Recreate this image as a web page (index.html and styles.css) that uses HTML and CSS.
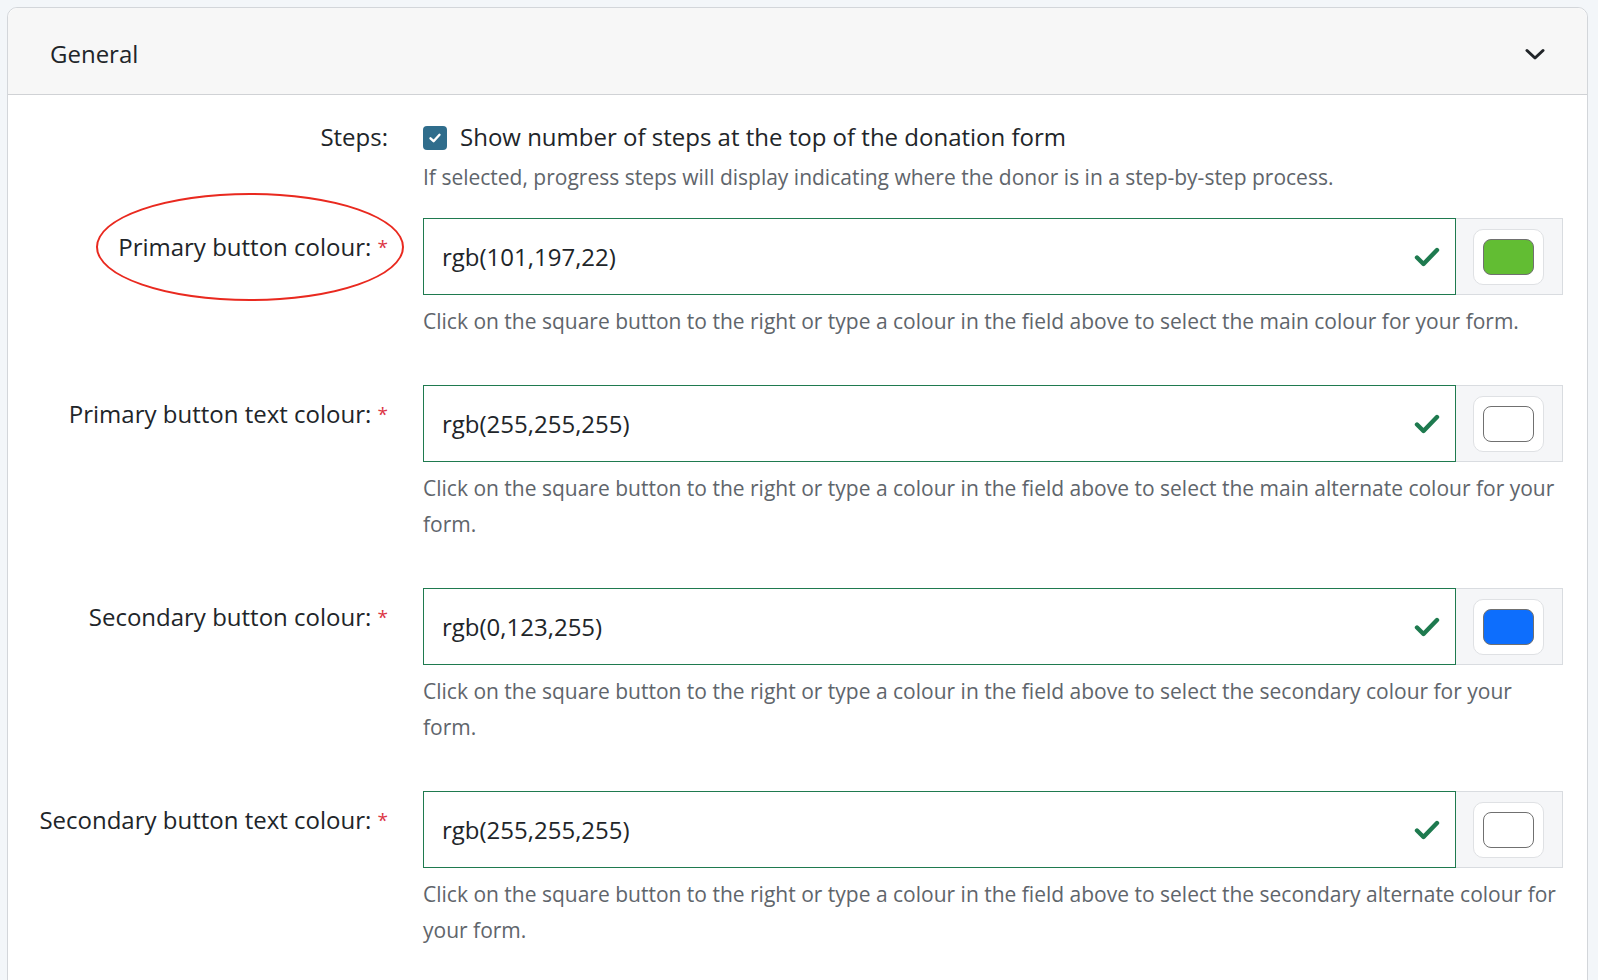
FILE: index.html
```html
<!DOCTYPE html>
<html lang="en">
<head>
<meta charset="utf-8">
<title>General</title>
<link rel="stylesheet" href="styles.css">
</head>
<body>
<div class="card">
  <div class="card-header">
    <span class="card-title">General</span>
    <svg class="chevron" width="20" height="13" viewBox="0 0 20 13"><path d="M2 2.5 L10 10 L18 2.5" fill="none" stroke="#212529" stroke-width="3" stroke-linecap="round" stroke-linejoin="round"/></svg>
  </div>
  <div class="card-body">
    <div class="form-row steps-row">
      <div class="label steps-label">Steps:</div>
      <div class="field">
        <div class="check-line">
          <span class="checkbox"><svg width="16" height="16" viewBox="0 0 16 16"><path d="M3.5 8.3 L6.6 11.2 L12.5 4.8" fill="none" stroke="#fff" stroke-width="2.4" stroke-linecap="round" stroke-linejoin="round"/></svg></span>
          <span class="check-text">Show number of steps at the top of the donation form</span>
        </div>
        <div class="help help-steps">If selected, progress steps will display indicating where the donor is in a step-by-step process.</div>
      </div>
    </div>

    <div class="form-row">
      <div class="label">Primary button colour: <span class="req">*</span><span class="ellipse"></span></div>
      <div class="field">
        <div class="input-group">
          <div class="input">rgb(101,197,22)<svg class="ok" width="26" height="22" viewBox="0 0 26 22"><path d="M3 11.5 L9.5 18 L23 4" fill="none" stroke="#1e7a4f" stroke-width="4.4" stroke-linecap="round" stroke-linejoin="round"/></svg></div>
          <div class="addon"><span class="swatch-btn"><span class="swatch green"></span></span></div>
        </div>
        <div class="help">Click on the square button to the right or type a colour in the field above to select the main colour for your form.</div>
      </div>
    </div>

    <div class="form-row">
      <div class="label">Primary button text colour: <span class="req">*</span></div>
      <div class="field">
        <div class="input-group">
          <div class="input">rgb(255,255,255)<svg class="ok" width="26" height="22" viewBox="0 0 26 22"><path d="M3 11.5 L9.5 18 L23 4" fill="none" stroke="#1e7a4f" stroke-width="4.4" stroke-linecap="round" stroke-linejoin="round"/></svg></div>
          <div class="addon"><span class="swatch-btn"><span class="swatch white"></span></span></div>
        </div>
        <div class="help">Click on the square button to the right or type a colour in the field above to select the main alternate colour for your form.</div>
      </div>
    </div>

    <div class="form-row">
      <div class="label">Secondary button colour: <span class="req">*</span></div>
      <div class="field">
        <div class="input-group">
          <div class="input">rgb(0,123,255)<svg class="ok" width="26" height="22" viewBox="0 0 26 22"><path d="M3 11.5 L9.5 18 L23 4" fill="none" stroke="#1e7a4f" stroke-width="4.4" stroke-linecap="round" stroke-linejoin="round"/></svg></div>
          <div class="addon"><span class="swatch-btn"><span class="swatch blue"></span></span></div>
        </div>
        <div class="help">Click on the square button to the right or type a colour in the field above to select the secondary colour for your form.</div>
      </div>
    </div>

    <div class="form-row">
      <div class="label">Secondary button text colour: <span class="req">*</span></div>
      <div class="field">
        <div class="input-group">
          <div class="input">rgb(255,255,255)<svg class="ok" width="26" height="22" viewBox="0 0 26 22"><path d="M3 11.5 L9.5 18 L23 4" fill="none" stroke="#1e7a4f" stroke-width="4.4" stroke-linecap="round" stroke-linejoin="round"/></svg></div>
          <div class="addon"><span class="swatch-btn"><span class="swatch white"></span></span></div>
        </div>
        <div class="help">Click on the square button to the right or type a colour in the field above to select the secondary alternate colour for your form.</div>
      </div>
    </div>
  </div>
</div>
</body>
</html>
```

FILE: styles.css
```css
*, *::before, *::after {
  box-sizing: border-box;
}
html, body {
  margin: 0;
  padding: 0;
}
body {
  background: #f3f6f9;
  padding: 7px 10px 0 7px;
  font-family: "Open Sans", "Noto Sans", sans-serif;
  color: #212529;
  height: 980px;
  overflow: hidden;
}
.card {
  background: #fff;
  border: 1px solid #d3d6da;
  border-radius: 10px;
  min-height: 1100px;
}
.card-header {
  height: 87px;
  background: #f7f7f7;
  border-bottom: 1px solid #d0d2d5;
  border-radius: 10px 10px 0 0;
  display: flex;
  align-items: center;
  justify-content: space-between;
  padding: 0 42px;
}
.card-title {
  font-size: 24px;
  margin-top: 4px;
}
.chevron {
  display: block;
  margin-top: 7px;
}
.card-body {
  padding: 24px 24px 0 24px;
}
.form-row {
  display: grid;
  grid-template-columns: 356px 1fr;
  column-gap: 35px;
  margin-bottom: 46px;
}
.steps-row {
  margin-bottom: 23px;
}
.label {
  position: relative;
  text-align: right;
  font-size: 24px;
  line-height: 38px;
  padding-top: 10px;
  white-space: nowrap;
}
.steps-label {
  padding-top: 0;
  margin-top: -1px;
}
.req {
  color: #dc3545;
  font-size: 19px;
  position: relative;
  top: -2px;
}
.ellipse {
  position: absolute;
  left: 64px;
  top: -25px;
  width: 308px;
  height: 108px;
  border: 2px solid #e9291f;
  border-radius: 50%;
  pointer-events: none;
}
.check-line {
  display: flex;
  align-items: center;
  height: 38px;
}
.checkbox {
  width: 24px;
  height: 24px;
  border-radius: 4px;
  background: #2f6d8c;
  display: flex;
  align-items: center;
  justify-content: center;
  margin-right: 13px;
  flex: none;
}
.checkbox svg {
  display: block;
}
.check-text {
  font-size: 24px;
  position: relative;
  top: -2px;
}
.help {
  font-size: 21px;
  line-height: 36px;
  color: #60656b;
  margin-top: 8px;
}
.help-steps {
  margin-top: 2px;
}
.input-group {
  display: flex;
  height: 77px;
}
.input {
  flex: 1;
  border: 1px solid #1f7a4f;
  display: flex;
  align-items: center;
  justify-content: space-between;
  padding: 0 15px 0 18px;
  font-size: 24px;
  color: #212529;
}
.ok {
  display: block;
}
.addon {
  width: 107px;
  flex: none;
  border: 1px solid #d9dce0;
  border-left: none;
  background: #f5f6f8;
  display: flex;
  align-items: center;
  padding-left: 17px;
}
.swatch-btn {
  width: 71px;
  height: 56px;
  border: 1px solid #dfe1e4;
  border-radius: 10px;
  background: #fff;
  display: flex;
  align-items: center;
  justify-content: center;
}
.swatch {
  width: 51px;
  height: 36px;
  border: 1.5px solid #707070;
  border-radius: 8px;
}
.swatch.green { background: #62bd33; }
.swatch.white { background: #ffffff; }
.swatch.blue { background: #0d6efd; }
```
